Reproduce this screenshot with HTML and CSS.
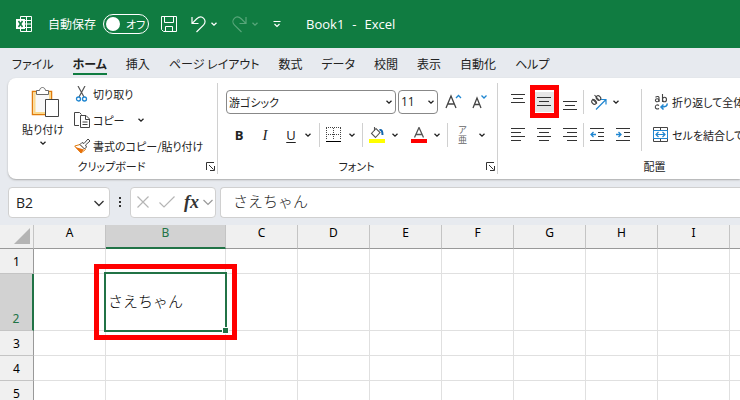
FILE: index.html
```html
<!DOCTYPE html>
<html lang="ja">
<head>
  <meta charset="UTF-8" />
  <meta name="viewport" content="width=device-width, initial-scale=1.0"/>
  <title>Book1 - Excel</title>
  <link rel="stylesheet" href="styles.css">
</head>
<body>
  <!-- shared arrow -->
  <svg class="sprite" aria-hidden="true">
    <symbol id="chevron" viewBox="0 0 8 8"><path d="M1.5 2.7 4 5.2 6.5 2.7" fill="none" stroke="currentColor" stroke-width="1.3"/></symbol>
  </svg>

  <header class="titlebar">
    <svg class="excel-logo" width="16" height="16" viewBox="0 0 16 16" fill="none" stroke="#fff">
      <path d="M4.5 3V.5h11v15h-11V13M10.500.5v15M9 4.500h6.500M9 8h6.500M9 11.500h6.500"/>
      <path d="M0 3h9v10H0z" fill="#fff" stroke="none"/>
      <path d="M2.500 5l4 6M6.500 5l-4 6" stroke="#107c41" stroke-width="1.500"/>
    </svg>
    <span class="autosave-label">自動保存</span>
    <button class="toggle" role="switch" aria-checked="false" aria-label="自動保存"><span class="knob"></span>オフ</button>
    <button class="tool save" aria-label="上書き保存">
      <svg width="16" height="16" viewBox="0 0 16 16" fill="none" stroke="#fff"><path d="M.5.5h15v15H2.500l-2-2zM3.500.5v6h9v-6M4.500 15.500v-5h7v5"/></svg>
    </button>
    <button class="tool undo" aria-label="元に戻す">
      <svg width="15" height="17" viewBox="0 0 15 17" fill="none" stroke="#fff" stroke-width="1.200"><path d="M1 1v6.500h6.500M1.200 7.300 5.500 3C8.500.2 11 .6 12.700 2.300c1.800 1.800 1.800 4.700 0 6.500L5.500 16"/></svg>
      <svg class="chev"><use href="#chevron"/></svg>
    </button>
    <button class="tool redo" aria-label="やり直し" disabled>
      <svg width="15" height="17" viewBox="0 0 15 17" fill="none" stroke="currentColor" stroke-width="1.200"><path d="M14 1v6.500H7.500M13.800 7.300 9.500 3C6.500.2 4 .6 2.300 2.300.5 4.100.5 7 2.300 8.800L9.500 16"/></svg>
      <svg class="chev"><use href="#chevron"/></svg>
    </button>
    <button class="tool customize" aria-label="クイック アクセス ツール バーのユーザー設定">
      <svg width="8" height="8" viewBox="0 0 8 8" fill="none" stroke="#fff" stroke-width="1.200"><path d="M.5 1.500h7M1.500 4 4 6.500 6.500 4"/></svg>
    </button>
    <div class="doc-title"><span>Book1</span><span>-</span><span>Excel</span></div>
  </header>

  <nav class="tabs">
    <a href="#file">ファイル</a>
    <a href="#home" class="active">ホーム</a>
    <a href="#insert">挿入</a>
    <a href="#layout">ページ レイアウト</a>
    <a href="#formulas">数式</a>
    <a href="#data">データ</a>
    <a href="#review">校閲</a>
    <a href="#view">表示</a>
    <a href="#automate">自動化</a>
    <a href="#help">ヘルプ</a>
  </nav>

  <section class="ribbon">
    <div class="group clipboard">
      <div class="group-body">
        <button class="paste">
          <svg width="32" height="31" viewBox="-4 0 32 31" fill="none">
            <path d="M1.500 4.500h19v23h-19z" fill="#fff" stroke="#e07b0c" stroke-width="1.500"/>
            <path d="M3.500 6h15.500v20H3.500z" fill="#f8f8f8" stroke="#fbd98c" stroke-width="2"/>
            <path d="M5.500 7.500v-4h3c.5-4 5.500-4 6 0h3v4z" fill="#fff" stroke="#6a6a6a"/>
            <path d="M14.500 12.500h13v17h-13z" fill="#fff" stroke="#444"/>
          </svg>
          <span>貼り付け</span>
          <svg class="chev"><use href="#chevron"/></svg>
        </button>
        <div class="clip-actions">
          <button>
            <svg width="17" height="16" viewBox="0 0 17 16" fill="none"><path d="M4 0l6 11M11 0 5 11" stroke="#555" stroke-width="1.200"/><circle cx="4.500" cy="13" r="2" stroke="#2086d0" stroke-width="1.300"/><circle cx="10.500" cy="13" r="2" stroke="#2086d0" stroke-width="1.300"/></svg>
            <span>切り取り</span>
          </button>
          <button>
            <svg width="17" height="16" viewBox="0 0 17 16" fill="none" stroke="#444"><path d="M5 13.500H.5V.5h5l2 2"/><path d="M6.500 3.500h5.500l3.500 3.500v8.500h-9zM11.500 3.500v4h4M8.500 10h5M8.500 12.500h5"/></svg>
            <span>コピー</span>
            <svg class="chev"><use href="#chevron"/></svg>
          </button>
          <button>
            <svg width="17" height="16" viewBox="0 0 17 16"><path d="M.7 8l5.300-1.500 5.500 5L7 15z" fill="#fff" stroke="#e07b0c"/><path d="M1 9l9 2.500L7 15z" fill="#e8700a"/><path d="M6 6.500l2-2 2 1 4-4.500 2 2-4.500 4 1 2-2 2z" fill="#fff" stroke="#444"/></svg>
            <span>書式のコピー/貼り付け</span>
          </button>
        </div>
      </div>
      <div class="group-label">クリップボード
        <button class="launcher" aria-label="クリップボード"><svg width="9" height="9" viewBox="0 0 9 9" fill="none" stroke="#333"><path d="M.5 8V.5H8M3 3l4.500 4.500M8.500 4v4.500H4"/></svg></button>
      </div>
    </div>

    <div class="group font">
      <div class="group-body rows">
        <div class="row">
          <label class="combo font-name"><select aria-label="フォント"><option>游ゴシック</option></select><svg class="chev"><use href="#chevron"/></svg></label>
          <label class="combo font-size"><select aria-label="フォント サイズ"><option>11</option></select><svg class="chev"><use href="#chevron"/></svg></label>
          <button class="grow" aria-label="フォント サイズの拡大">
            <svg width="17" height="16" viewBox="0 0 17 16" fill="none"><path d="M1 14 6 2l5 12M2.800 10h6.400" stroke="#444" stroke-width="1.300"/><path d="M11 4l2.500-2.500L16 4" stroke="#2086d0" stroke-width="1.300"/></svg>
          </button>
          <button class="grow" aria-label="フォント サイズの縮小">
            <svg width="17" height="16" viewBox="0 0 17 16" fill="none"><path d="M1 14 5 4l4 10M2.500 10.500h5" stroke="#444" stroke-width="1.300"/><path d="M9.500 1.500 12 4l2.500-2.500" stroke="#2086d0" stroke-width="1.300"/></svg>
          </button>
        </div>
        <div class="row styles">
          <button class="cell bold">B</button>
          <button class="cell italic">I</button>
          <button class="cell underline">U</button>
          <button class="arrow" aria-label="下線の種類"><svg class="chev"><use href="#chevron"/></svg></button>
          <span class="sep"></span>
          <button class="split" aria-label="罫線">
            <svg width="16" height="16" viewBox="0 0 16 16" fill="none" stroke="#444"><path d="M.5 1v12M7.500 1v12M14.500 1v12M0 .5h15M0 7.500h15" stroke-dasharray="1 1"/><path d="M0 14.500h15" stroke="#000"/></svg>
            <svg class="chev"><use href="#chevron"/></svg>
          </button>
          <span class="sep"></span>
          <button class="split" aria-label="塗りつぶしの色">
            <svg width="16" height="16" viewBox="0 0 16 16" fill="none"><path d="M7 1.500 2.500 6.500l4 4L11 5.500zM5.500 0v4" stroke="#555" stroke-width="1.100"/><path d="M10.500 3c2-.5 3 1 3 5" stroke="#1567ad" stroke-width="2"/><path d="M0 12h16v4H0z" fill="#ff0"/></svg>
            <svg class="chev"><use href="#chevron"/></svg>
          </button>
          <button class="split" aria-label="フォントの色">
            <svg width="16" height="16" viewBox="0 0 16 16" fill="none"><path d="M3.500 10.500 8 .5l4.500 10M5 7.500h6" stroke="#555" stroke-width="1.300"/><path d="M0 12h16v4H0z" fill="red"/></svg>
            <svg class="chev"><use href="#chevron"/></svg>
          </button>
          <span class="sep"></span>
          <button class="split phonetic" aria-label="ふりがなの表示/非表示">
            <span class="ruby"><span>ア</span><span>亜</span></span>
            <svg class="chev"><use href="#chevron"/></svg>
          </button>
        </div>
      </div>
      <div class="group-label">フォント
        <button class="launcher" aria-label="フォントの設定"><svg width="9" height="9" viewBox="0 0 9 9" fill="none" stroke="#333"><path d="M.5 8V.5H8M3 3l4.500 4.500M8.500 4v4.500H4"/></svg></button>
      </div>
    </div>

    <div class="group align">
      <div class="group-body">
        <div class="rows">
          <div class="row">
            <button class="cell" aria-label="上揃え"><svg width="14" height="18" viewBox="0 0 14 18" stroke="#333"><path d="M0 1.500h14M2 5.500h10M0 9.500h14"/></svg></button>
            <button class="cell pressed" aria-label="上下中央揃え" aria-pressed="true"><svg width="14" height="18" viewBox="0 0 14 18" stroke="#333"><path d="M0 4.500h14M2 8.500h10M0 12.500h14"/></svg></button>
            <button class="cell" aria-label="下揃え"><svg width="14" height="18" viewBox="0 0 14 18" stroke="#333"><path d="M0 8.500h14M2 12.500h10M0 16.500h14"/></svg></button>
            <span class="sep"></span>
            <button class="split orient" aria-label="方向">
              <svg width="18" height="18" viewBox="0 0 18 18" fill="none"><g stroke="#444" stroke-width="1.100"><ellipse cx="4" cy="9" rx="2" ry="2.500" transform="rotate(-45 4 9)"/><path d="M2.500 6l4.500 4.500M4.500 2l4.500 5"/><ellipse cx="8.500" cy="5" rx="2" ry="2.500" transform="rotate(-45 8.500 5)"/></g><path d="M6 16.500 15.500 7M11 6.500h5v5" stroke="#2086d0" stroke-width="1.200"/></svg>
              <svg class="chev"><use href="#chevron"/></svg>
            </button>
          </div>
          <div class="row">
            <button class="cell" aria-label="左揃え"><svg width="14" height="14" viewBox="0 0 14 14" stroke="#333"><path d="M0 .5h14M0 4.500h10M0 8.500h14M0 12.500h10"/></svg></button>
            <button class="cell" aria-label="中央揃え"><svg width="14" height="14" viewBox="0 0 14 14" stroke="#333"><path d="M0 .5h14M2 4.500h10M0 8.500h14M2 12.500h10"/></svg></button>
            <button class="cell" aria-label="右揃え"><svg width="14" height="14" viewBox="0 0 14 14" stroke="#333"><path d="M0 .5h14M4 4.500h10M0 8.500h14M4 12.500h10"/></svg></button>
            <span class="sep"></span>
            <button class="cell indent" aria-label="インデントを減らす"><svg width="14" height="14" viewBox="0 0 14 14" fill="none" stroke="#333"><path d="M0 .5h14M8 4.500h6M8 8.500h6M0 12.500h14"/><path d="M6 6.500H1M3.500 4 1 6.500 3.500 9" stroke="#2086d0" stroke-width="1.300"/></svg></button>
            <button class="cell" aria-label="インデントを増やす"><svg width="14" height="14" viewBox="0 0 14 14" fill="none" stroke="#333"><path d="M0 .5h14M8 4.500h6M8 8.500h6M0 12.500h14"/><path d="M0 6.500h5M2.500 4 5 6.500 2.500 9" stroke="#2086d0" stroke-width="1.300"/></svg></button>
          </div>
        </div>
        <span class="sep tall"></span>
        <div class="rows wide">
          <button class="text-btn">
            <svg width="16" height="16" viewBox="0 0 16 16" fill="none" stroke="#444" stroke-width="1.100"><path d="M2.500 3.200c2-1.500 4-.5 3.500 1.300V8"/><ellipse cx="4.200" cy="6.300" rx="1.800" ry="1.500"/><path d="M9.500 0v8"/><ellipse cx="11.500" cy="5.500" rx="2" ry="2.300"/><path d="M6 11.500c-2-1.300-3.700-.2-3.700 1.500S4 15.700 6 14.500"/><path d="M14 9.500c.5 2.500-1 3.500-6 3.500M10.500 10.500 8 13l2.500 2.500" stroke="#2086d0" stroke-width="1.500"/></svg>
            <span>折り返して全体を表示する</span>
          </button>
          <button class="text-btn">
            <svg width="16" height="16" viewBox="0 0 16 16" fill="none" stroke="#444"><path d="M.5.5h14v14H.5zM.5 3.500h14M.5 11.500h14M7.500.5v3M7.500 11.500v3"/><path d="M.5 3.500h14v8H.5z" fill="#fff" stroke="#2086d0"/><path d="M3 7.500h9M5.500 5 3 7.500 5.500 10M9.500 5 12 7.500 9.500 10" stroke="#2086d0" stroke-width="1.200"/></svg>
            <span>セルを結合して中央揃え</span>
          </button>
        </div>
      </div>
      <div class="group-label">配置</div>
    </div>
  </section>

  <div class="formula-row">
    <label class="name-box"><input type="text" value="B2" aria-label="名前ボックス"><svg class="big-chev" width="12" height="12" viewBox="0 0 12 12" fill="none" stroke="#333" stroke-width="1.300"><path d="M1.500 4 6 8.500 10.500 4"/></svg></label>
    <svg class="dots" width="4" height="12" viewBox="0 0 4 12" fill="#333"><path d="M1 1h2v2H1zM1 5h2v2H1zM1 9h2v2H1z"/></svg>
    <div class="fx-box">
      <button aria-label="キャンセル" disabled><svg width="14" height="14" viewBox="0 0 14 14" stroke="#b5b5b5" stroke-width="1.200"><path d="M1.500 1.500l11 11M12.500 1.500l-11 11"/></svg></button>
      <button aria-label="入力" disabled><svg width="18" height="14" viewBox="0 0 18 14" fill="none" stroke="#b5b5b5" stroke-width="1.200"><path d="M1.500 7.500 6 12 16.500 1.500"/></svg></button>
      <button class="fx" aria-label="関数の挿入">fx</button>
      <svg class="fx-chev" width="10" height="12" viewBox="0 0 10 12" fill="none" stroke="#999" stroke-width="1.200"><path d="M.5 4 5 8.500 9.500 4"/></svg>
    </div>
    <input class="formula" type="text" value="さえちゃん" aria-label="数式バー">
  </div>

  <main class="sheet">
    <table>
      <colgroup>
        <col class="c-head"><col><col class="c-wide"><col><col><col><col><col><col><col><col>
      </colgroup>
      <thead>
        <tr>
          <th class="corner"><svg width="17" height="17" viewBox="0 0 17 17"><path d="M16 0v16H0z" fill="#b4b4b4"/></svg></th>
          <th>A</th><th class="sel">B</th><th>C</th><th>D</th><th>E</th><th>F</th><th>G</th><th>H</th><th>I</th><th></th>
        </tr>
      </thead>
      <tbody>
        <tr><th>1</th><td></td><td></td><td></td><td></td><td></td><td></td><td></td><td></td><td></td><td></td></tr>
        <tr class="tall-row"><th class="sel">2</th><td></td><td class="active-cell">さえちゃん<span class="selection"></span><span class="handle"></span><span class="marker"></span></td><td></td><td></td><td></td><td></td><td></td><td></td><td></td><td></td></tr>
        <tr><th>3</th><td></td><td></td><td></td><td></td><td></td><td></td><td></td><td></td><td></td><td></td></tr>
        <tr><th>4</th><td></td><td></td><td></td><td></td><td></td><td></td><td></td><td></td><td></td><td></td></tr>
        <tr><th>5</th><td></td><td></td><td></td><td></td><td></td><td></td><td></td><td></td><td></td><td></td></tr>
      </tbody>
    </table>
  </main>
</body>
</html>
```

FILE: styles.css
```css
:root {
  --green: #107c41;
  --cell-green: #217346;
  --bg: #e7eaef;
  --text: #222;
  --line: #d0d0d0;
  --mark: #ff0000;
}

* {
  box-sizing: border-box;
}

body {
  margin: 0;
  height: 100vh;
  display: flex;
  flex-direction: column;
  overflow: hidden;
  background: var(--bg);
  color: var(--text);
  font-family: "Open Sans", "Noto Sans CJK JP", sans-serif;
  font-size: 12px;
  line-height: 16px;
}

button, input, select {
  margin: 0;
  padding: 0;
  border: none;
  background: none;
  color: inherit;
  font: inherit;
}

button, .tabs, .group-label, .autosave-label, select {
  font-family: "Noto Sans CJK JP", sans-serif;
  font-feature-settings: "palt";
  white-space: nowrap;
}

svg {
  display: block;
  flex: none;
}

.sprite {
  position: absolute;
  width: 0;
  height: 0;
}

.chev {
  width: 8px;
  height: 8px;
}

/* title bar */
.titlebar {
  flex: none;
  display: flex;
  align-items: center;
  height: 48px;
  padding-left: 16px;
  background: var(--green);
  color: #fff;
}

.autosave-label {
  margin-left: 16px;
}

.toggle {
  display: flex;
  align-items: center;
  gap: 6px;
  width: 46px;
  height: 20px;
  margin-left: 7px;
  padding-left: 2px;
  border: 1px solid #fff;
  border-radius: 10px;
  font-size: 11px;
}

.knob {
  flex: none;
  width: 14px;
  height: 14px;
  border-radius: 50%;
  background: #fff;
}

.tool {
  display: flex;
  align-items: center;
  gap: 4px;
  margin-left: 14px;
}

.save {
  margin-left: 12px;
}

.redo {
  color: #58a67a;
}

.doc-title {
  display: flex;
  gap: 8px;
  margin-left: 25px;
  font-size: 13px;
}

/* tabs */
.tabs {
  flex: none;
  display: flex;
  gap: 19px;
  height: 30px;
  padding: 6px 12px 3px;
}

.tabs a {
  color: inherit;
  text-decoration: none;
  line-height: 19px;
}

.tabs .active {
  border-bottom: 2px solid var(--green);
  font-weight: bold;
}

/* ribbon */
.ribbon {
  flex: none;
  display: flex;
  margin-left: 8px;
  height: 101px;
  padding: 5px 0;
  overflow: hidden;
  background: #fff;
  border-radius: 8px 0 0 8px;
  box-shadow: 0 1px 2px #aaa;
  font-size: 11px;
}

.group {
  flex: none;
  display: flex;
  flex-direction: column;
  border-right: 1px solid var(--line);
}

.clipboard {
  width: 210px;
}

.font {
  width: 280px;
}

.align {
  width: 316px;
}

.group-body {
  display: flex;
  height: 77px;
}

.group-label {
  display: grid;
  grid-template-columns: 1fr auto 1fr;
  align-items: center;
  padding-right: 2px;
}

.group-label::before {
  content: "";
}

.launcher {
  justify-self: end;
}

.paste {
  display: flex;
  flex-direction: column;
  align-items: center;
  width: 54px;
  margin-left: 8px;
  padding-top: 4px;
}

.paste span {
  margin: 3px 0 2px;
}

.clip-actions {
  display: flex;
  flex-direction: column;
  gap: 10px;
  padding: 3px 0 0 4px;
}

.clip-actions button {
  display: flex;
  align-items: center;
  gap: 2px;
  height: 16px;
}

.clip-actions .chev {
  margin-left: 10px;
}

.group-body.rows {
  padding-left: 8px;
}

.rows {
  display: flex;
  flex-direction: column;
  gap: 9px;
  padding-top: 7px;
}

.row {
  display: flex;
  align-items: center;
  height: 24px;
}

.combo {
  display: grid;
  align-items: center;
  height: 24px;
  margin-right: 2px;
  border: 1px solid #888;
  border-radius: 4px;
}

.combo select, .combo .chev {
  grid-area: 1 / 1;
}

.combo select {
  appearance: none;
  padding-left: 2px;
}

.combo .chev {
  justify-self: end;
  margin-right: 2px;
  pointer-events: none;
}

.font-name {
  width: 170px;
}

.font-size {
  width: 40px;
}

.font-size select {
  font-family: "Open Sans", sans-serif;
  font-size: 12px;
}

.grow {
  margin-left: 5px;
  margin-right: 5px;
}

.cell {
  display: flex;
  align-items: center;
  justify-content: center;
  width: 26px;
  height: 24px;
}

.bold, .italic, .underline {
  font-family: "Open Sans", sans-serif;
  font-size: 13px;
}

.bold {
  font-weight: bold;
}

.italic {
  font-family: "Liberation Serif", serif;
  font-size: 15px;
  font-style: italic;
}

.underline {
  text-decoration: underline;
  text-underline-offset: 2px;
}

.sep {
  flex: none;
  width: 1px;
  height: 24px;
  background: var(--line);
}

.sep.tall {
  height: 62px;
  margin: 6px 0 0 5px;
}

.arrow {
  padding-right: 7px;
}

.split {
  display: flex;
  align-items: center;
  gap: 6px;
  padding: 0 6px;
}

.phonetic {
  gap: 11px;
  padding-left: 10px;
}

.ruby {
  display: flex;
  flex-direction: column;
  align-items: center;
  color: #666;
  font-size: 9px;
  line-height: 10px;
}

.pressed {
  position: relative;
  background: #e6e6e6;
  background-clip: content-box;
  padding: 2px;
}

.pressed::after {
  content: "";
  position: absolute;
  inset: -5px -2px -4px -1px;
  border: 5px solid var(--mark);
}

.align .rows {
  padding-left: 7px;
}

.orient {
  gap: 4px;
}

.align .rows.wide {
  padding-left: 11px;
}

.text-btn {
  display: flex;
  align-items: center;
  gap: 3px;
  height: 24px;
}

/* formula bar */
.formula-row {
  flex: none;
  display: flex;
  align-items: center;
  height: 46px;
  padding-left: 8px;
}

.name-box, .fx-box, .formula {
  height: 31px;
  background: #fff;
  border: 1px solid var(--line);
  border-radius: 4px;
}

.name-box {
  display: flex;
  align-items: center;
  width: 102px;
  padding: 2px 4px 0 7px;
  font-size: 14px;
}

.name-box input {
  flex: 1;
  min-width: 0;
}

.dots {
  margin: 0 8px;
}

.fx-box {
  display: flex;
  align-items: center;
  gap: 8px;
  width: 86px;
  padding-left: 5px;
}

.fx-box button {
  flex: none;
}

.fx-box button.fx {
  font: italic bold 18px "Liberation Serif", serif;
  color: #333;
}

.fx-chev {
  margin-left: -4px;
}

.formula {
  flex: 1;
  min-width: 0;
  margin-left: 4px;
  padding: 0 0 3px 12px;
  border-right: none;
  border-radius: 4px 0 0 4px;
  font: 300 15px "Noto Sans CJK JP", sans-serif;
}

/* sheet */
.sheet {
  flex: 1;
  overflow: hidden;
  background: #fff;
}

table {
  width: 802px;
  table-layout: fixed;
  border-collapse: separate;
  border-spacing: 0;
}

col {
  width: 72px;
}

.c-head {
  width: 34px;
}

.c-wide {
  width: 120px;
}

th, td {
  height: 25px;
  padding: 0;
  border-right: 1px solid #e0e0e0;
  border-bottom: 1px solid #e0e0e0;
}

th {
  background: #f0f0f0;
  border-color: #c4c4c4;
  font-family: "Noto Sans", sans-serif;
  font-size: 12px;
  font-weight: normal;
  color: #000;
}

thead th {
  height: 24px;
  padding-bottom: 7px;
  border-bottom-color: #999;
}

tbody th {
  vertical-align: bottom;
  padding-bottom: 3px;
  border-right-color: #999;
}

.corner {
  padding: 0 0 0 14px;
}

th.sel {
  background: #d2d2d2;
  color: var(--cell-green);
}

thead th.sel {
  padding-bottom: 6px;
  border-bottom: 2px solid var(--cell-green);
}

tbody th.sel {
  border-right: 2px solid var(--cell-green);
}

.tall-row > * {
  height: 57px;
}

.active-cell {
  position: relative;
  padding: 0 0 3px 2px;
  font: 300 15px "Noto Sans CJK JP", sans-serif;
  color: #000;
}

.selection {
  position: absolute;
  inset: -2px;
  border: 2px solid var(--cell-green);
}

.handle {
  position: absolute;
  right: -4px;
  bottom: -4px;
  width: 7px;
  height: 7px;
  background: var(--cell-green);
  border: 1px solid #fff;
}

.marker {
  position: absolute;
  inset: -10px -12px;
  border: 5px solid var(--mark);
}
```
